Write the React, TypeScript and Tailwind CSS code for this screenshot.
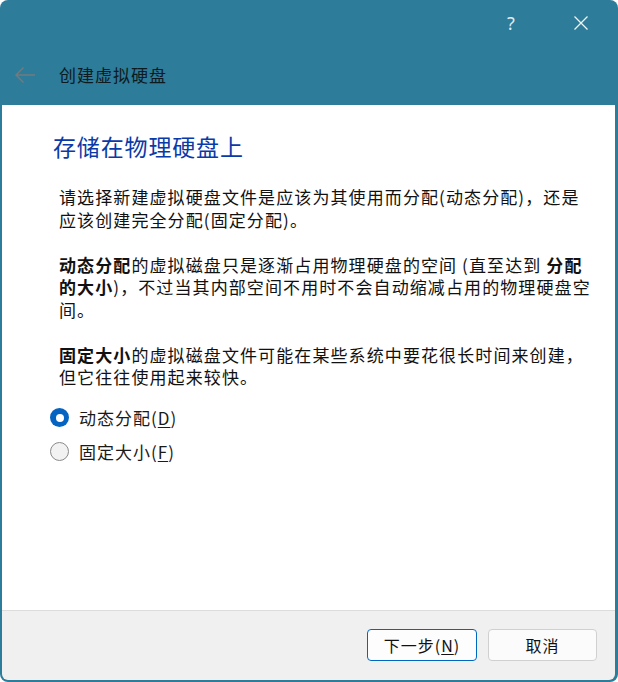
import React from "react";

const font = { fontFamily: '"Noto Sans CJK SC", "Noto Sans", sans-serif' };

function Radio({ checked, label, mnemonic }: { checked: boolean; label: string; mnemonic: string }) {
  return (
    <div className="flex items-center h-[34px]">
      {checked ? (
        <div className="w-[19px] h-[19px] rounded-full bg-[#0563c1] flex items-center justify-center ml-[48px]">
          <div className="w-[8px] h-[8px] rounded-full bg-white" />
        </div>
      ) : (
        <div className="w-[19px] h-[19px] rounded-full border border-[#8a8a8a] bg-[#f2f2f2] ml-[48px]" />
      )}
      <span className="ml-[10px] text-[17px] tracking-[1px] leading-[22px] text-[#1a1a1a]">
        {label}(<span className="underline underline-offset-2">{mnemonic}</span>)
      </span>
    </div>
  );
}

function B({ children }: { children: React.ReactNode }) {
  return <b className="inline-block leading-[22.5px]">{children}</b>;
}

export default function App() {
  return (
    <div className="w-[618px] h-[682px] bg-white" style={font}>
      <div className="w-full h-full rounded-[8px] bg-[#2d7c99] flex flex-col overflow-hidden pl-[2px] pr-[3px] pb-[2px]">
        {/* header */}
        <div className="h-[105px] flex flex-col shrink-0">
          <div className="h-[48px] flex items-start justify-end">
            <div className="w-[40px] h-[46px] flex items-center justify-center text-[18px] text-[#dfeaf0] mr-[30px]" style={{ fontFamily: '"Noto Sans", sans-serif' }}>
              ?
            </div>
            <div className="w-[40px] h-[46px] flex items-center justify-center mr-[14px]">
              <svg width="16" height="16" viewBox="0 0 16 16">
                <path d="M1.5 1.5 L14.5 14.5 M14.5 1.5 L1.5 14.5" stroke="#eef4f7" strokeWidth="1.3" fill="none" />
              </svg>
            </div>
          </div>
          <div className="flex items-center h-[54px]">
            <svg width="22" height="18" viewBox="0 0 22 18" className="ml-[12px]">
              <path d="M21 9 H2 M9.5 1.5 L2 9 L9.5 16.5" stroke="#747a7d" strokeWidth="1.4" fill="none" />
            </svg>
            <span className="ml-[23px] text-[17px] tracking-[1px] leading-[22px] text-[#0d1a20]">创建虚拟硬盘</span>
          </div>
        </div>
        {/* content */}
        <div className="flex-1 bg-white flex flex-col">
          <div className="pl-[51px] pt-[26px] text-[23px] tracking-[0.85px] leading-[30px] text-[#0a3aa8]">
            存储在物理硬盘上
          </div>
          <div className="pl-[57px] pr-[20px] mt-[25px] text-[17px] tracking-[1.1px] leading-[22.5px] text-[#111]">
            <p>
              请选择新建虚拟硬盘文件是应该为其使用而分配(动态分配)，还是
              <br />
              应该创建完全分配(固定分配)。
            </p>
            <p className="mt-[22.5px] whitespace-nowrap">
              <B>动态分配</B>的虚拟磁盘只是逐渐占用物理硬盘的空间 (直至达到 <B>分配</B>
              <br />
              <B>的大小</B>)，不过当其内部空间不用时不会自动缩减占用的物理硬盘空
              <br />
              间。
            </p>
            <p className="mt-[22.5px] whitespace-nowrap">
              <B>固定大小</B>的虚拟磁盘文件可能在某些系统中要花很长时间来创建，
              <br />
              但它往往使用起来较快。
            </p>
          </div>
          <div className="mt-[12px] flex flex-col">
            <Radio checked label="动态分配" mnemonic="D" />
            <Radio checked={false} label="固定大小" mnemonic="F" />
          </div>
        </div>
        {/* footer */}
        <div className="h-[70px] shrink-0 bg-[#f0f0f0] border-t border-[#dcdcdc] flex items-start justify-end pt-[18px] pr-[18px] gap-[11px] rounded-b-[6px]">
          <button className="w-[110px] h-[32px] rounded-[4px] border border-[#0067c0] bg-[#fdfdfd] text-[16px] tracking-[1px] text-[#111] flex items-center justify-center">
            下一步(<span className="underline underline-offset-2">N</span>)
          </button>
          <button className="w-[109px] h-[32px] rounded-[4px] border border-[#d0d0d0] bg-[#fbfbfb] text-[16px] tracking-[1px] text-[#111] flex items-center justify-center">
            取消
          </button>
        </div>
      </div>
    </div>
  );
}
